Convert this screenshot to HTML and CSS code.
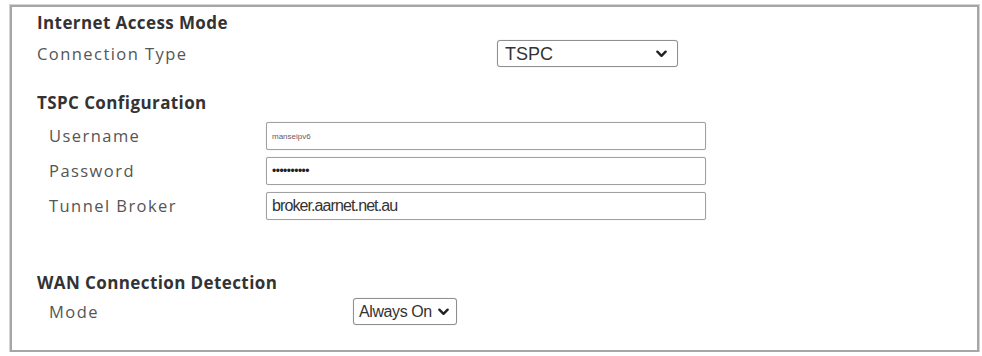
FILE: index.html
```html
<!DOCTYPE html>
<html>
<head>
<meta charset="utf-8">
<link rel="stylesheet" href="styles.css">
</head>
<body>
<div class="frame">
  <div class="heading h1">Internet Access Mode</div>
  <div class="row row-type">
    <span class="label">Connection Type</span>
    <div class="select select-type"><span class="sel-text">TSPC</span><svg class="chev" viewBox="0 0 12 8"><path d="M1.5 1.5 L6 6 L10.5 1.5" fill="none" stroke="#222" stroke-width="2.6" stroke-linecap="round" stroke-linejoin="round"/></svg></div>
  </div>
  <div class="heading h2">TSPC Configuration</div>
  <div class="fields">
    <span class="label sub">Username</span>
    <input class="field user" type="text" value="manseipv6">
    <span class="label sub">Password</span>
    <input class="field pass" type="password" value="abcdefghij">
    <span class="label sub">Tunnel Broker</span>
    <input class="field broker" type="text" value="broker.aarnet.net.au">
  </div>
  <div class="heading h3">WAN Connection Detection</div>
  <div class="row row-mode">
    <span class="label sub">Mode</span>
    <div class="select select-mode"><span class="sel-text small">Always On</span><svg class="chev" viewBox="0 0 12 8"><path d="M1.5 1.5 L6 6 L10.5 1.5" fill="none" stroke="#222" stroke-width="2.6" stroke-linecap="round" stroke-linejoin="round"/></svg></div>
  </div>
</div>
</body>
</html>
```

FILE: styles.css
```css
html, body {
  margin: 0;
  padding: 0;
  background: #fff;
}

.frame {
  box-sizing: border-box;
  margin: 5px 3px 0 10px;
  height: 347px;
  border: 2px solid #a6a6a6;
  box-shadow: 0 0 0 1px #d4d4d4;
  padding: 5px 0 0 25px;
  background: #fff;
}

.heading {
  font-family: "Open Sans", sans-serif;
  font-weight: 700;
  font-size: 17px;
  line-height: 21px;
  color: #333;
  letter-spacing: 0.4px;
}

.label {
  font-family: "Open Sans", sans-serif;
  font-size: 16.5px;
  line-height: 20px;
  letter-spacing: 1.45px;
  color: #555;
}

.label.sub {
  padding-left: 12px;
}

.row {
  display: grid;
  align-items: center;
}

.row-type {
  grid-template-columns: 460px auto;
  margin-top: 7px;
  justify-content: start;
}

.h2 {
  margin-top: 25px;
}

.fields {
  display: grid;
  grid-template-columns: 229px 440px;
  row-gap: 7px;
  align-items: center;
  margin-top: 9px;
}

.h3 {
  margin-top: 52px;
}

.row-mode {
  grid-template-columns: 316px auto;
  justify-content: start;
  margin-top: 5px;
}

.select {
  box-sizing: border-box;
  display: flex;
  align-items: center;
  justify-content: space-between;
  border: 1px solid #8f8f8f;
  border-radius: 3px;
  background: #fff;
  height: 27px;
  padding: 0 10px 0 7px;
  box-shadow: 0 0 1px #bbb;
}

.select-type {
  width: 181px;
}

.select-mode {
  width: 104px;
  padding: 0 7px 0 5px;
}

.sel-text {
  font-family: "Liberation Sans", Arial, sans-serif;
  font-size: 18px;
  color: #333;
  line-height: 20px;
  white-space: nowrap;
}

.sel-text.small {
  font-size: 16px;
  letter-spacing: -0.4px;
}

.chev {
  width: 11px;
  height: 8px;
  flex: none;
}

.field {
  box-sizing: border-box;
  height: 28px;
  width: 440px;
  margin: 0;
  border: 1px solid #a0a0a0;
  border-radius: 2px;
  box-shadow: 0 0 1px #c8c8c8;
  padding: 0 5px;
  background: #fff;
  color: #333;
  font-family: "Liberation Sans", Arial, sans-serif;
  font-size: 16px;
  letter-spacing: -0.9px;
  outline: none;
}

.field.user {
  font-size: 8px;
  letter-spacing: 0;
  color: #6a5a66;
}

.field.pass {
  font-size: 12px;
  letter-spacing: -0.5px;
  color: #222;
}
```
